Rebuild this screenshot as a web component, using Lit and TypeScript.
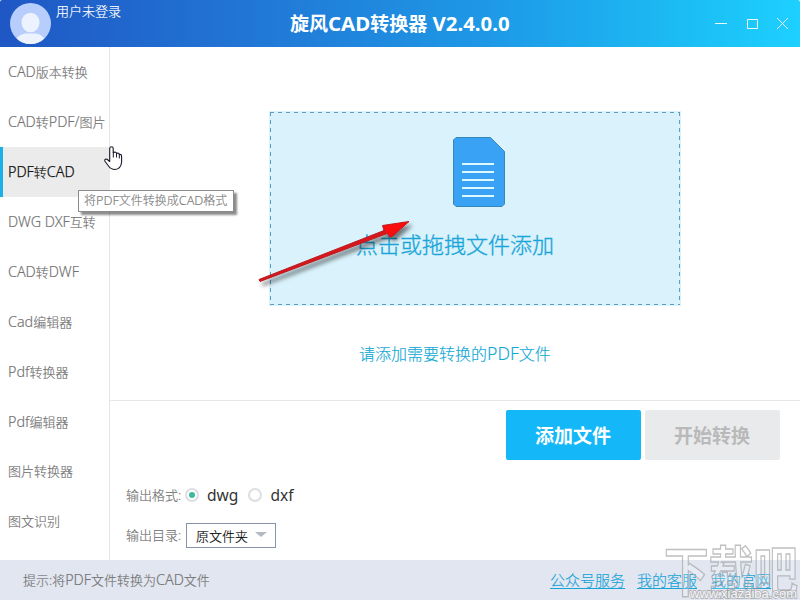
import { LitElement, html, css, svg } from "lit";
import { customElement, state } from "lit/decorators.js";
import { classMap } from "lit/directives/class-map.js";

const NAV = [
  "CAD版本转换",
  "CAD转PDF/图片",
  "PDF转CAD",
  "DWG DXF互转",
  "CAD转DWF",
  "Cad编辑器",
  "Pdf转换器",
  "Pdf编辑器",
  "图片转换器",
  "图文识别",
];

// Latin runs are set slightly larger than the Chinese text around them.
const mixed = (text: string) =>
  text.split(/([A-Za-z][\x20-\x7e]*|\s[\x20-\x7e]+)/).map((part, i) => (i % 2 ? html`<span class="latin">${part}</span>` : part));

@customElement("app-root")
export class AppRoot extends LitElement {
  @state() active = 2;
  @state() format = "dwg";

  static styles = css`
    :host {
      display: flex;
      flex-direction: column;
      position: relative;
      width: 800px;
      height: 600px;
      overflow: hidden;
      background: #fff;
      color: #727272;
      font: 300 13px/20px "Noto Sans", "Noto Sans CJK SC", sans-serif;
      -webkit-text-stroke: 0.15px currentColor;
      white-space: nowrap;
    }
    * { box-sizing: border-box; }
    svg { display: block; flex: none; }
    .latin { font-size: 1.1em; line-height: 0; white-space: pre; }
    header {
      display: grid;
      grid-template-columns: 290px 1fr auto;
      height: 47px;
      flex: none;
      color: #fff;
      background: linear-gradient(90deg, #1f57c4 0%, #2176d5 31%, #1e9ae7 62%, #1cc0f6 88%, #1dd0ff 100%);
      border-radius: 2px 2px 0 0;
    }
    .user { display: flex; padding: 2px 0 0 10px; gap: 5px; }
    .user span { margin-top: -1px; }
    .title { font-weight: 700; font-size: 19px; line-height: 48px; }
    .title, button, .opt { -webkit-text-stroke: 0; }
    .title .latin { font-size: 1.075em; }
    .controls { display: flex; padding: 17px 11px 0 0; }
    .body { display: flex; flex: 1; min-height: 0; }
    nav { width: 110px; border-right: 1px solid #e4e4e6; flex: none; }
    .item { height: 50px; line-height: 50px; padding-left: 8px; cursor: pointer; }
    .item:nth-last-child(-n + 2) { line-height: 48px; }
    .item.on {
      background: #ebebeb;
      color: #111;
      border-left: 3px solid #1cb0e8;
      padding-left: 5px;
      margin-right: -1px;
    }
    .item.on .latin { font-size: 1.1em; -webkit-text-stroke: 0.25px currentColor; }
    main { flex: 1; display: flex; flex-direction: column; min-width: 0; }
    .work { height: 354px; border-bottom: 1px solid #e6e6e6; padding: 64px 0 0 159px; }
    .drop {
      position: relative;
      width: 412px;
      height: 195px;
      background: #d9f2fb;
      display: flex;
      flex-direction: column;
      align-items: center;
      padding-top: 26px;
    }
    .dashes { position: absolute; inset: 0; }
    .doc { margin-left: 8px; }
    .droptext { margin-top: 21px; margin-right: 40px; width: 198px; font-size: 22px; line-height: 32px; color: #1aa5da; -webkit-text-stroke: 0.35px currentColor; }
    .status { margin: 36px 0 0 90px; font-size: 16px; line-height: 24px; color: #12a8d6; }
    .actions { display: flex; gap: 4px; padding: 9px 0 0 396px; }
    button {
      width: 135px;
      height: 50px;
      border: 0;
      border-radius: 2px;
      padding: 2px 1px 0 0;
      font: 700 19px/48px "Noto Sans", "Noto Sans CJK SC", sans-serif;
      color: #fff;
      background: #14b8f8;
    }
    button.off { color: #b9b9b9; background: #e9eaec; }
    .row { display: flex; align-items: center; height: 24px; padding-left: 16px; }
    .formats { margin-top: 23px; }
    .dirs { margin-top: 16px; height: 25px; }
    .label { width: 59px; margin-top: -1px; }
    .dirs .label { width: 60px; margin-top: -2px; }
    .radio { width: 14px; height: 14px; border: 2px solid #dcdee2; border-radius: 50%; background: #fff; display: grid; place-items: center; flex: none; }
    .radio.sel::after { content: ""; width: 6px; height: 6px; border-radius: 50%; background: #3cba9c; }
    .opt { font-size: 15.6px; color: #333; font-weight: 400; margin: 0 10px 0 8px; }
    .select { width: 90px; height: 25px; border: 1px solid #8795aa; display: flex; align-items: center; padding: 1px 8px 0 9px; justify-content: space-between; color: #000; }
    .select svg { margin-top: -3px; }
    footer { height: 40px; flex: none; background: #e2e6f0; display: flex; align-items: center; padding-left: 23px; position: relative; }
    .links { position: absolute; left: 550px; top: 10px; display: flex; font-size: 15px; }
    .links a { color: #16a4d8; text-decoration: underline; text-underline-offset: 2px; text-decoration-thickness: 1px; margin-right: 12px; }
    .links a:nth-child(2) { margin-right: 14px; }
    .tip { position: absolute; left: 78px; top: 190px; width: 156px; height: 22px; border: 1px solid #8c8c8c; background: #fff; font-size: 12px; line-height: 19px; padding-left: 5px; color: #7c7c7c; box-shadow: 3px 3px 2px rgba(0, 0, 0, 0.45); }
    .tip .latin { font-size: 1.05em; }
    .over { position: absolute; left: 0; top: 0; pointer-events: none; -webkit-text-stroke: 0; }
    .mark { font-family: "Noto Sans CJK SC", sans-serif; font-weight: 700; -webkit-text-stroke: 1.4px #a5a5aa; }
    .url { font-family: "Liberation Sans", sans-serif; font-weight: 400; -webkit-text-stroke: 1.8px #999; }
  `;

  private avatar() {
    return svg`<svg width="41" height="42" viewBox="0 0 41 42">
      <defs><clipPath id="c"><circle cx="20.5" cy="21.5" r="20.5"/></clipPath></defs>
      <circle cx="20.5" cy="21.5" r="20.5" fill="#b7cdfb"/>
      <ellipse cx="20.5" cy="20.5" rx="9" ry="9.8" fill="#edf3fe"/>
      <path clip-path="url(#c)" d="M4 42C6 35 11 31.5 16 31.5H25C30 31.5 35 35 37 42Z" fill="#edf3fe"/>
    </svg>`;
  }

  render() {
    return html`
      <header>
        <div class="user">${this.avatar()}<span>用户未登录</span></div>
        <div class="title">${mixed("旋风CAD转换器 V2.4.0.0")}</div>
        <div class="controls">
          <svg width="74" height="14" fill="none" stroke="#e8fbff">
            <path d="M0 6.5H12M32.5 2.5H42.5V11.5H32.5ZM62 1L73 12M73 1L62 12"/>
          </svg>
        </div>
      </header>
      <div class="body">
        <nav>
          ${NAV.map((t, i) => html`<div class=${classMap({ item: true, on: i === this.active })} @click=${() => (this.active = i)}>${mixed(t)}</div>`)}
        </nav>
        <main>
          <div class="work">
            <div class="drop">
              <svg class="dashes" width="412" height="195" fill="none" stroke="#5d9dc0" stroke-dasharray="4 4">
                <path d="M1 1.5H411M1 193.5H411M1.5 1V194M410.5 1V194"/>
              </svg>
              <svg class="doc" width="52" height="70" viewBox="0 0 52 70">
                <path d="M3 .5H37.5L51.5 14.5V67L49 69.5H3L.5 67V3Z" fill="#39a2f5" stroke="#3488ba"/>
                <path d="M9 27H41M9 35H41M9 43H41M9 51H41M9 59H41" stroke="#dcfaff" stroke-width="2"/>
              </svg>
              <div class="droptext">点击或拖拽文件添加</div>
            </div>
            <div class="status">${mixed("请添加需要转换的PDF文件")}</div>
          </div>
          <div class="actions"><button>添加文件</button><button class="off">开始转换</button></div>
          <div class="row formats">
            <span class="label">输出格式:</span>
            ${["dwg", "dxf"].map((f) => html`<span class=${classMap({ radio: true, sel: f === this.format })} @click=${() => (this.format = f)}></span><span class="opt">${f}</span>`)}
          </div>
          <div class="row dirs">
            <span class="label">输出目录:</span>
            <div class="select">原文件夹<svg width="12" height="5"><path d="M0 0H12L6 5Z" fill="#b3bac4"/></svg></div>
          </div>
        </main>
      </div>
      <footer>
        <span>${mixed("提示:将PDF文件转换为CAD文件")}</span>
        <div class="links"><a>公众号服务</a><a>我的客服</a><a>我的官网</a></div>
      </footer>
      <div class="tip">${mixed("将PDF文件转换成CAD格式")}</div>
      <svg class="over" width="800" height="600">
        <defs>
          <filter id="s" x="-10%" y="-10%" width="130%" height="140%"><feDropShadow dx="3" dy="4" stdDeviation="2" flood-color="#000" flood-opacity=".5"/></filter>
        </defs>
        <g filter="url(#s)">
          <path d="M259 279.5L384 230.5L382.500 225.500L409 221.500L391 237.500L387 233.500L260 281.500Z" fill="#d8171c" stroke="#b91c22" stroke-width="1" stroke-linejoin="round"/>
          <path d="M383 226L408 221.700L391 237L386 231Z" fill="#f90d0d"/>
        </g>
        <path d="M109.700 161.500V148.300Q110 146.700 111.500 146.700Q113.200 146.700 113.200 148.500V152.500Q116.500 151.500 116.500 153.500Q119 152.500 119.300 154.500Q121.600 154 121.600 156.500V162Q121 169 115 169.500Q111 169.500 108.500 166L104.800 161Q104.300 158.500 107 159.300Z" fill="#fff" stroke="#181828" stroke-width="1.100" stroke-linejoin="round"/>
        <path d="M113.300 152.500V157.500M116.500 153.500V157.500M119.300 154.500V158.500" stroke="#181828" stroke-width="1"/>
        <text class="mark" x="664" y="592" font-size="54" textLength="134" lengthAdjust="spacingAndGlyphs" fill="#fff" fill-opacity=".2" stroke="#a5a5aa" stroke-opacity=".7" stroke-width="1.400">下载吧</text>
        <text class="url" x="690" y="598" font-size="13" textLength="107" lengthAdjust="spacingAndGlyphs" fill="#f4f4f6" stroke="#999" stroke-width="1.800" stroke-opacity=".6" paint-order="stroke">www.xiazaiba.com</text>
      </svg>
    `;
  }
}
